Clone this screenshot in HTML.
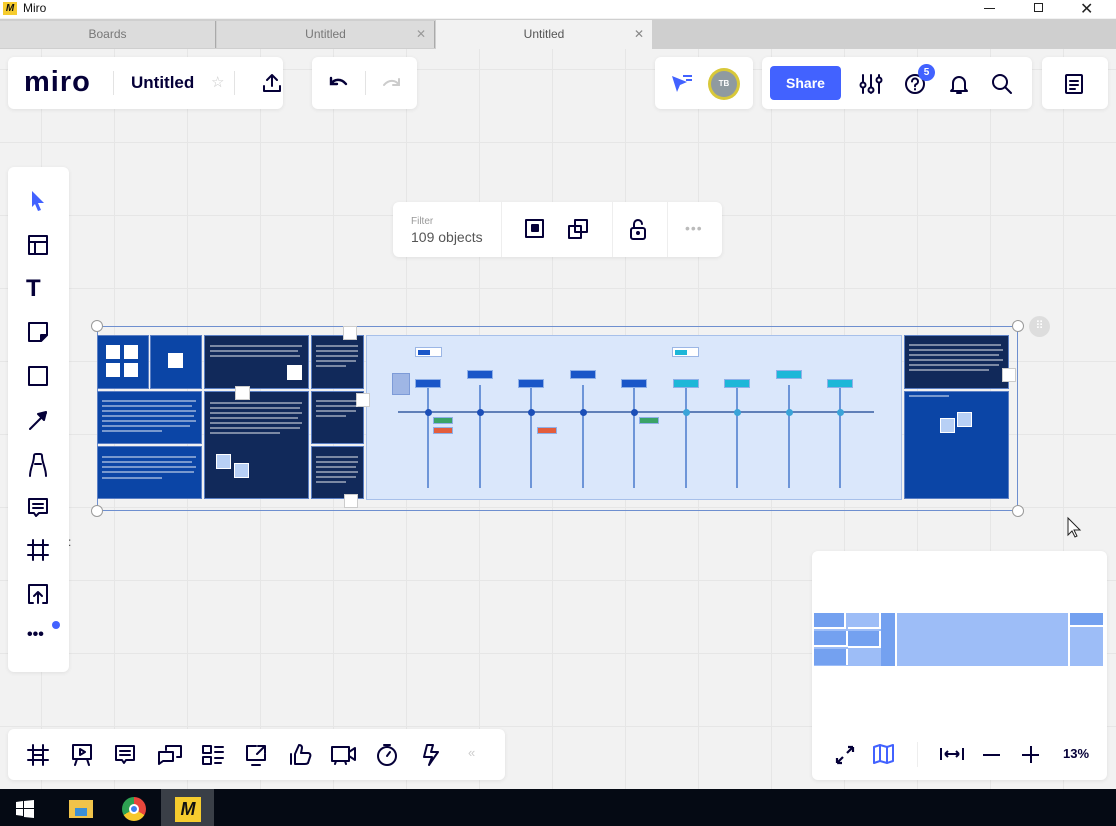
<!DOCTYPE html>
<html><head><meta charset="utf-8"><style>
*{margin:0;padding:0;box-sizing:border-box}
body{width:1116px;height:826px;overflow:hidden;font-family:"Liberation Sans",sans-serif;background:#f2f2f2;position:relative}
.a{position:absolute}
.card{position:absolute;background:#fff;border-radius:6px;box-shadow:0 1px 4px rgba(0,0,0,.08)}
svg{position:absolute;overflow:visible}
.ic{fill:none;stroke:#050038;stroke-width:2;stroke-linecap:round;stroke-linejoin:round}
.nv{background:#11295a;border:1px solid #5b7fc4}
.bl{background:#0b45a6;border:1px solid #5b7fc4}
.lab{position:absolute;width:26px;height:9px;border:1px solid #8fb0e8}
.vl{position:absolute;width:2px;background:#6d95d8;top:385px;height:103px}
.dot{position:absolute;width:7px;height:7px;border-radius:50%;top:409px}
.tx{position:absolute;height:2px;background:rgba(255,255,255,.45)}
</style></head><body>
<!-- canvas grid -->
<div class="a" style="left:0;top:49px;width:1116px;height:740px;background-color:#f2f2f2;background-image:linear-gradient(#e6e6e6 1px,transparent 1px),linear-gradient(90deg,#e6e6e6 1px,transparent 1px);background-size:73px 73px;background-position:-32px 20px"></div>
<!-- title bar -->
<div class="a" style="left:0;top:0;width:1116px;height:18px;background:#fff"></div>
<div class="a" style="left:3px;top:2px;width:14px;height:13px;background:#f6cc2e;font:bold 10px/13px 'Liberation Sans';color:#111;text-align:center;font-style:italic">M</div>
<div class="a" style="left:23px;top:1px;font-size:12px;color:#111">Miro</div>
<div class="a" style="left:984px;top:8px;width:11px;height:1px;background:#222"></div>
<div class="a" style="left:1034px;top:3px;width:9px;height:9px;border:1px solid #222"></div>
<div class="a" style="left:1080px;top:-1px;font-size:16px;color:#222">✕</div>
<!-- tabs -->
<div class="a" style="left:0;top:19px;width:1116px;height:30px;background:#cfcfcf"></div>
<div class="a" style="left:0;top:21px;width:216px;height:27px;background:#dcdcdc;border-right:1px solid #aaa;font-size:12px;color:#777;text-align:center;line-height:27px">Boards</div>
<div class="a" style="left:217px;top:21px;width:218px;height:27px;background:#dcdcdc;border-right:1px solid #aaa;font-size:12px;color:#777;text-align:center;line-height:27px">Untitled<span style="position:absolute;right:8px;color:#999">✕</span></div>
<div class="a" style="left:436px;top:20px;width:216px;height:29px;background:#f2f2f2;font-size:12px;color:#555;text-align:center;line-height:29px">Untitled<span style="position:absolute;right:8px;color:#888">✕</span></div>
<!-- top left card -->
<div class="card" style="left:8px;top:57px;width:275px;height:52px"></div>
<div class="a" style="left:24px;top:64px;font:bold 29px/36px 'Liberation Sans';color:#050038;letter-spacing:1px">miro</div>
<div class="a" style="left:113px;top:71px;width:1px;height:24px;background:#e3e3e3"></div>
<div class="a" style="left:131px;top:73px;font:bold 17px/20px 'Liberation Sans';color:#050038">Untitled</div>
<div class="a" style="left:211px;top:73px;font-size:15px;color:#c9c9c9">☆</div>
<div class="a" style="left:234px;top:71px;width:1px;height:24px;background:#e3e3e3"></div>
<svg style="left:262px;top:73px" width="20" height="20" class="ic"><path d="M10 13V2M5 7l5-5 5 5M2 13v5h16v-5"/></svg>
<div class="card" style="left:312px;top:57px;width:105px;height:52px"></div>
<svg style="left:328px;top:75px" width="20" height="14"><path d="M3 3v6h6M3 9c3-5 10-6 15 0" fill="none" stroke="#050038" stroke-width="2.4" stroke-linecap="round"/></svg>
<div class="a" style="left:365px;top:71px;width:1px;height:24px;background:#e3e3e3"></div>
<svg style="left:382px;top:76px" width="20" height="14"><path d="M17 3v6h-6M17 9c-3-5-10-6-15 0" fill="none" stroke="#ccc" stroke-width="2" stroke-linecap="round"/></svg>
<!-- top right cards -->
<div class="card" style="left:655px;top:57px;width:98px;height:52px"></div>
<svg style="left:671px;top:74px" width="24" height="20"><path d="M1 2l5 16 3-7 7-3z" fill="#4262ff"/><path d="M12 2h9M15 6h6" stroke="#4262ff" stroke-width="2"/></svg>
<div class="a" style="left:708px;top:68px;width:32px;height:32px;border-radius:50%;background:#d8c83a"></div>
<div class="a" style="left:711px;top:71px;width:26px;height:26px;border-radius:50%;background:#8f9aa0;color:#fff;font:bold 8px/26px 'Liberation Sans';text-align:center">TB</div>
<div class="card" style="left:762px;top:57px;width:270px;height:52px"></div>
<div class="a" style="left:770px;top:66px;width:71px;height:34px;background:#4262ff;border-radius:4px;color:#fff;font:bold 14px/34px 'Liberation Sans';text-align:center">Share</div>
<svg style="left:859px;top:73px" width="24" height="22" class="ic"><path d="M4 2v18M12 2v18M20 2v18"/><circle cx="4" cy="12" r="2.5" fill="#fff"/><circle cx="12" cy="17" r="2.5" fill="#fff"/><circle cx="20" cy="7" r="2.5" fill="#fff"/></svg>
<svg style="left:904px;top:73px" width="22" height="22" class="ic"><circle cx="11" cy="11" r="9"/><path d="M8 8.5a3 3 0 1 1 4 2.8c-1 .4-1 1-1 2M11 16v.5"/></svg>
<div class="a" style="left:918px;top:64px;width:17px;height:17px;border-radius:50%;background:#4262ff;color:#fff;font:bold 10px/17px 'Liberation Sans';text-align:center">5</div>
<svg style="left:948px;top:73px" width="22" height="22" class="ic"><path d="M5 16V10a6 6 0 0 1 12 0v6l2 2H3zM9 20h4"/></svg>
<svg style="left:991px;top:73px" width="22" height="22" class="ic"><circle cx="9" cy="9" r="7"/><path d="M14 14l6 6"/></svg>
<div class="card" style="left:1042px;top:57px;width:66px;height:52px"></div>
<svg style="left:1064px;top:73px" width="20" height="22" class="ic"><rect x="2" y="2" width="16" height="18" rx="1"/><path d="M6 8h8M6 12h8M6 16h5"/></svg>
<!-- filter bar -->
<div class="card" style="left:393px;top:202px;width:329px;height:55px"></div>
<div class="a" style="left:411px;top:216px;font-size:10px;color:#999">Filter</div>
<div class="a" style="left:411px;top:229px;font-size:14px;color:#555">109 objects</div>
<div class="a" style="left:501px;top:202px;width:1px;height:55px;background:#eee"></div>
<svg style="left:524px;top:218px" width="22" height="22" class="ic"><rect x="2" y="2" width="17" height="17"/><rect x="8" y="7" width="6" height="6" fill="#050038"/></svg>
<svg style="left:567px;top:218px" width="24" height="22" class="ic"><rect x="8" y="2" width="12" height="12"/><rect x="2" y="8" width="12" height="12"/></svg>
<div class="a" style="left:612px;top:202px;width:1px;height:55px;background:#eee"></div>
<svg style="left:628px;top:218px" width="20" height="24" class="ic"><rect x="3" y="10" width="14" height="11" rx="2"/><path d="M6 10V6a4 4 0 0 1 8 0"/><circle cx="10" cy="15" r="1" fill="#050038"/></svg>
<div class="a" style="left:667px;top:202px;width:1px;height:55px;background:#eee"></div>
<div class="a" style="left:685px;top:220px;font-size:14px;color:#bbb;letter-spacing:1px">•••</div>
<!-- board selection -->
<div class="a" style="left:97px;top:326px;width:921px;height:185px;border:1.5px solid #6e8fcf"></div>
<div class="a" style="left:91px;top:320px;width:12px;height:12px;border-radius:50%;background:#fff;border:1.5px solid #999"></div>
<div class="a" style="left:1012px;top:320px;width:12px;height:12px;border-radius:50%;background:#fff;border:1.5px solid #999"></div>
<div class="a" style="left:91px;top:505px;width:12px;height:12px;border-radius:50%;background:#fff;border:1.5px solid #999"></div>
<div class="a" style="left:1012px;top:505px;width:12px;height:12px;border-radius:50%;background:#fff;border:1.5px solid #999"></div>
<div class="a" style="left:1029px;top:316px;width:21px;height:21px;border-radius:50%;background:#ddd;color:#fff;font-size:11px;text-align:center;line-height:21px">⠿</div>
<!-- panels -->
<div class="a bl" style="left:97px;top:335px;width:52px;height:54px"></div>
<div class="a bl" style="left:150px;top:335px;width:52px;height:54px"></div>
<div class="a bl" style="left:97px;top:391px;width:105px;height:53px"></div>
<div class="a bl" style="left:97px;top:446px;width:105px;height:53px"></div>
<div class="a nv" style="left:204px;top:335px;width:105px;height:54px"></div>
<div class="a nv" style="left:204px;top:391px;width:105px;height:108px"></div>
<div class="a nv" style="left:311px;top:335px;width:53px;height:54px"></div>
<div class="a nv" style="left:311px;top:391px;width:53px;height:53px"></div>
<div class="a nv" style="left:311px;top:446px;width:53px;height:53px"></div>
<div class="a" style="left:366px;top:335px;width:536px;height:165px;background:#dae7fb;border:1px solid #a7c0ea"></div>
<div class="a nv" style="left:904px;top:335px;width:105px;height:54px"></div>
<div class="a bl" style="left:904px;top:391px;width:105px;height:108px"></div>
<!-- small notes -->
<div class="a" style="left:106px;top:345px;width:14px;height:14px;background:#fff"></div>
<div class="a" style="left:124px;top:345px;width:14px;height:14px;background:#fff"></div>
<div class="a" style="left:106px;top:363px;width:14px;height:14px;background:#fff"></div>
<div class="a" style="left:124px;top:363px;width:14px;height:14px;background:#fff"></div>
<div class="a" style="left:168px;top:353px;width:15px;height:15px;background:#fff"></div>
<div class="a" style="left:287px;top:365px;width:15px;height:15px;background:#fff"></div>
<div class="a" style="left:216px;top:454px;width:15px;height:15px;background:#b8d0f5;border:1px solid #fff"></div>
<div class="a" style="left:234px;top:463px;width:15px;height:15px;background:#b8d0f5;border:1px solid #fff"></div>
<div class="a" style="left:940px;top:418px;width:15px;height:15px;background:#b8d0f5;border:1px solid #fff"></div>
<div class="a" style="left:957px;top:412px;width:15px;height:15px;background:#b8d0f5;border:1px solid #fff"></div>
<div class="a" style="left:235px;top:386px;width:15px;height:14px;background:#fff;border:1px solid #ccc"></div>
<div class="a" style="left:343px;top:326px;width:14px;height:14px;background:#fff;border:1px solid #ccc"></div>
<div class="a" style="left:356px;top:393px;width:14px;height:14px;background:#fff;border:1px solid #ccc"></div>
<div class="a" style="left:344px;top:494px;width:14px;height:14px;background:#fff;border:1px solid #ccc"></div>
<div class="a" style="left:1002px;top:368px;width:14px;height:14px;background:#fff;border:1px solid #ccc"></div>
<!-- text bars -->
<div class="tx" style="left:210px;top:345px;width:92px"></div><div class="tx" style="left:210px;top:350px;width:88px"></div><div class="tx" style="left:210px;top:355px;width:90px"></div>
<div class="tx" style="left:210px;top:402px;width:92px"></div><div class="tx" style="left:210px;top:407px;width:90px"></div><div class="tx" style="left:210px;top:412px;width:92px"></div><div class="tx" style="left:210px;top:417px;width:88px"></div><div class="tx" style="left:210px;top:422px;width:92px"></div><div class="tx" style="left:210px;top:427px;width:90px"></div><div class="tx" style="left:210px;top:432px;width:70px"></div>
<div class="tx" style="left:102px;top:400px;width:94px"></div><div class="tx" style="left:102px;top:405px;width:90px"></div><div class="tx" style="left:102px;top:410px;width:94px"></div><div class="tx" style="left:102px;top:415px;width:92px"></div><div class="tx" style="left:102px;top:420px;width:94px"></div><div class="tx" style="left:102px;top:425px;width:88px"></div><div class="tx" style="left:102px;top:430px;width:60px"></div>
<div class="tx" style="left:102px;top:456px;width:94px"></div><div class="tx" style="left:102px;top:461px;width:90px"></div><div class="tx" style="left:102px;top:466px;width:94px"></div><div class="tx" style="left:102px;top:471px;width:92px"></div><div class="tx" style="left:102px;top:477px;width:60px"></div>
<div class="tx" style="left:316px;top:345px;width:42px"></div><div class="tx" style="left:316px;top:350px;width:42px"></div><div class="tx" style="left:316px;top:355px;width:42px"></div><div class="tx" style="left:316px;top:360px;width:40px"></div><div class="tx" style="left:316px;top:365px;width:30px"></div>
<div class="tx" style="left:316px;top:400px;width:42px"></div><div class="tx" style="left:316px;top:405px;width:42px"></div><div class="tx" style="left:316px;top:410px;width:40px"></div><div class="tx" style="left:316px;top:415px;width:30px"></div>
<div class="tx" style="left:316px;top:456px;width:42px"></div><div class="tx" style="left:316px;top:461px;width:42px"></div><div class="tx" style="left:316px;top:466px;width:40px"></div><div class="tx" style="left:316px;top:471px;width:42px"></div><div class="tx" style="left:316px;top:476px;width:40px"></div><div class="tx" style="left:316px;top:481px;width:30px"></div>
<div class="tx" style="left:909px;top:344px;width:92px"></div><div class="tx" style="left:909px;top:349px;width:94px"></div><div class="tx" style="left:909px;top:354px;width:90px"></div><div class="tx" style="left:909px;top:359px;width:94px"></div><div class="tx" style="left:909px;top:364px;width:90px"></div><div class="tx" style="left:909px;top:369px;width:80px"></div>
<div class="tx" style="left:909px;top:395px;width:40px"></div>
<!-- timeline -->
<div class="a" style="left:398px;top:411px;width:476px;height:2px;background:#5f7fb8"></div>
<div class="vl" style="left:427px"></div><div class="vl" style="left:479px"></div><div class="vl" style="left:530px"></div><div class="vl" style="left:582px"></div><div class="vl" style="left:633px"></div><div class="vl" style="left:685px"></div><div class="vl" style="left:736px"></div><div class="vl" style="left:788px"></div><div class="vl" style="left:839px"></div>
<div class="dot" style="left:425px;background:#1c4fb8"></div><div class="dot" style="left:477px;background:#1c4fb8"></div><div class="dot" style="left:528px;background:#1c4fb8"></div><div class="dot" style="left:580px;background:#1c4fb8"></div><div class="dot" style="left:631px;background:#1c4fb8"></div><div class="dot" style="left:683px;background:#3aa4d8"></div><div class="dot" style="left:734px;background:#3aa4d8"></div><div class="dot" style="left:786px;background:#3aa4d8"></div><div class="dot" style="left:837px;background:#3aa4d8"></div>
<div class="lab" style="left:415px;top:379px;background:#1a56c8"></div><div class="lab" style="left:467px;top:370px;background:#1a56c8"></div><div class="lab" style="left:518px;top:379px;background:#1a56c8"></div><div class="lab" style="left:570px;top:370px;background:#1a56c8"></div><div class="lab" style="left:621px;top:379px;background:#1a56c8"></div><div class="lab" style="left:673px;top:379px;background:#1db7d8"></div><div class="lab" style="left:724px;top:379px;background:#1db7d8"></div><div class="lab" style="left:776px;top:370px;background:#1db7d8"></div><div class="lab" style="left:827px;top:379px;background:#1db7d8"></div>
<div class="a" style="left:415px;top:347px;width:27px;height:10px;background:#fff;border:1px solid #9bb6e5"><div style="width:12px;height:5px;background:#1a56c8;margin:2px"></div></div>
<div class="a" style="left:672px;top:347px;width:27px;height:10px;background:#fff;border:1px solid #9bb6e5"><div style="width:12px;height:5px;background:#1db7d8;margin:2px"></div></div>
<div class="a" style="left:392px;top:373px;width:18px;height:22px;background:#9fb6e5;border:1px solid #7d9bd8"></div>
<div class="a" style="left:433px;top:417px;width:20px;height:7px;background:#3aa367;border:1px solid #8fb0e8"></div>
<div class="a" style="left:433px;top:427px;width:20px;height:7px;background:#e35d3c;border:1px solid #8fb0e8"></div>
<div class="a" style="left:537px;top:427px;width:20px;height:7px;background:#e35d3c;border:1px solid #8fb0e8"></div>
<div class="a" style="left:639px;top:417px;width:20px;height:7px;background:#3aa367;border:1px solid #8fb0e8"></div>
<!-- cursor -->
<svg style="left:1067px;top:517px" width="14" height="22"><path d="M1 1v17l4-4 3 6 2-1-3-6h6z" fill="#fff" stroke="#222" stroke-width="1"/></svg>
<!-- left toolbar -->
<div class="card" style="left:8px;top:167px;width:61px;height:505px"></div>
<svg style="left:30px;top:190px" width="16" height="22"><path d="M2 1l12 12h-6l3 7-3 1-3-7-3 3z" fill="#4262ff"/></svg>
<svg style="left:27px;top:234px" width="22" height="22" class="ic"><rect x="2" y="2" width="18" height="18"/><path d="M2 8h18M8 8v12"/></svg>
<div class="a" style="left:26px;top:275px;font:bold 24px 'Liberation Sans';color:#050038">T</div>
<svg style="left:27px;top:321px" width="22" height="22" class="ic"><path d="M2 2h18v12l-6 6H2z"/><path d="M14 20v-6h6z" fill="#050038"/></svg>
<svg style="left:27px;top:365px" width="22" height="22" class="ic"><rect x="2" y="2" width="18" height="18"/></svg>
<svg style="left:27px;top:409px" width="22" height="22" class="ic"><path d="M3 20L19 4"/><path d="M19 3l-8 2 6 6z" fill="#050038"/></svg>
<svg style="left:27px;top:452px" width="22" height="26" class="ic"><path d="M3 24c0-8 4-13 4-20 0-2 1-2 2-2h4c1 0 2 0 2 2 0 7 4 12 4 20M8 12h6"/></svg>
<svg style="left:27px;top:497px" width="22" height="22" class="ic"><path d="M2 2h18v14h-8l-3 3-2-3H2z"/><path d="M6 7h10M6 11h10"/></svg>
<svg style="left:27px;top:539px" width="22" height="22" class="ic"><path d="M6 1v20M16 1v20M1 6h20M1 16h20"/></svg>
<div class="a" style="left:68px;top:535px;font-size:12px;color:#444">:</div>
<svg style="left:27px;top:583px" width="22" height="22" class="ic"><path d="M6 20H2V2h18v18h-4M11 20V9M7 13l4-4 4 4"/></svg>
<div class="a" style="left:27px;top:626px;font:bold 16px 'Liberation Sans';color:#050038;letter-spacing:0px">•••</div>
<div class="a" style="left:52px;top:621px;width:8px;height:8px;border-radius:50%;background:#4262ff"></div>
<!-- bottom toolbar -->
<div class="card" style="left:8px;top:729px;width:497px;height:51px"></div>
<svg style="left:27px;top:744px" width="22" height="22" class="ic"><path d="M6 1v20M16 1v20M1 6h20M1 16h20M6 11h10"/></svg>
<svg style="left:71px;top:743px" width="22" height="24" class="ic"><rect x="2" y="2" width="18" height="14"/><path d="M9 6l5 3-5 3z M6 16l-2 6M16 16l2 6"/></svg>
<svg style="left:114px;top:744px" width="22" height="22" class="ic"><path d="M2 2h18v14h-8l-2 3-2-3H2z"/><path d="M6 7h10M6 11h10"/></svg>
<svg style="left:157px;top:744px" width="26" height="22" class="ic"><path d="M9 6V2h15v11h-4M2 20V8h14v9H6z"/></svg>
<svg style="left:201px;top:744px" width="24" height="22" class="ic"><rect x="2" y="2" width="8" height="7"/><rect x="2" y="13" width="8" height="7"/><path d="M14 3h8M14 8h8M14 14h8M14 19h6"/></svg>
<svg style="left:245px;top:744px" width="24" height="24" class="ic"><path d="M11 2H2v14h18v-6M13 2h7v7M20 2l-8 8M7 21h8"/></svg>
<svg style="left:289px;top:743px" width="24" height="24" class="ic"><path d="M2 11v10M6 11l4-9c2 0 3 1 3 3l-1 5h7c2 0 3 2 2 4l-2 6c-1 1-2 1-3 1H6z"/></svg>
<svg style="left:330px;top:745px" width="28" height="20" class="ic"><rect x="2" y="2" width="17" height="14"/><path d="M19 7l6-4v12l-6-4M6 16l-1 3M15 16l1 3"/></svg>
<svg style="left:376px;top:743px" width="24" height="24" class="ic"><circle cx="11" cy="13" r="9"/><path d="M11 13l3-4M8 2h6"/></svg>
<svg style="left:421px;top:743px" width="20" height="24" class="ic"><path d="M6 2L3 14h8l-3 8 9-13h-7l2-7z"/></svg>
<div class="a" style="left:468px;top:745px;font-size:13px;color:#ccc">«</div>
<!-- minimap -->
<div class="card" style="left:812px;top:551px;width:295px;height:229px"></div>
<div class="a" style="left:814px;top:613px;width:289px;height:53px;background:#9dbdf7"></div>
<div class="a" style="left:814px;top:613px;width:32px;height:16px;background:#74a1f0;border-right:2px solid #fff;border-bottom:2px solid #fff"></div>
<div class="a" style="left:848px;top:613px;width:33px;height:16px;background:#9dbdf7;border-right:2px solid #fff;border-bottom:2px solid #fff"></div>
<div class="a" style="left:814px;top:631px;width:34px;height:16px;background:#74a1f0;border-bottom:2px solid #fff;border-right:2px solid #fff"></div>
<div class="a" style="left:814px;top:649px;width:34px;height:16px;background:#74a1f0;border-right:2px solid #fff"></div>
<div class="a" style="left:848px;top:631px;width:33px;height:17px;background:#74a1f0;border-right:2px solid #fff;border-bottom:2px solid #fff"></div>
<div class="a" style="left:881px;top:613px;width:16px;height:53px;background:#74a1f0;border-right:2px solid #fff"></div>
<div class="a" style="left:1068px;top:613px;width:35px;height:53px;background:#9dbdf7;border-left:2px solid #fff"></div>
<div class="a" style="left:1070px;top:613px;width:33px;height:14px;background:#74a1f0;border-bottom:2px solid #fff"></div>
<svg style="left:834px;top:744px" width="22" height="22"><path d="M3 19l6-6M3 19v-5M3 19h5M19 3l-6 6M19 3v5M19 3h-5" fill="none" stroke="#050038" stroke-width="2.2"/></svg>
<svg style="left:872px;top:743px" width="24" height="22"><path d="M2 4l6-2 7 2 6-2v16l-6 2-7-2-6 2zM8 2v16M15 4v16" fill="none" stroke="#4262ff" stroke-width="2" stroke-linejoin="round"/></svg>
<div class="a" style="left:917px;top:742px;width:1px;height:25px;background:#eee"></div>
<svg style="left:939px;top:746px" width="26" height="16"><path d="M2 2v12M24 2v12M6 8h14M6 8l3-3M6 8l3 3M20 8l-3-3M20 8l-3 3" fill="none" stroke="#050038" stroke-width="2"/></svg>
<div class="a" style="left:983px;top:754px;width:17px;height:2px;background:#050038"></div>
<div class="a" style="left:1022px;top:754px;width:17px;height:2px;background:#050038"></div>
<div class="a" style="left:1030px;top:746px;width:2px;height:17px;background:#050038"></div>
<div class="a" style="left:1063px;top:746px;font:bold 13px 'Liberation Sans';color:#050038">13%</div>
<!-- taskbar -->
<div class="a" style="left:0;top:789px;width:1116px;height:37px;background:#050a14"></div>
<svg style="left:16px;top:800px" width="18" height="18"><path d="M0 2l7-1v7H0zM8 1l10-1v8H8zM0 9h7v7l-7-1zM8 9h10v9l-10-1z" fill="#fff"/></svg>
<div class="a" style="left:69px;top:800px;width:24px;height:18px;background:#f0c34a"></div>
<div class="a" style="left:75px;top:808px;width:12px;height:8px;background:#3b8fd6"></div>
<div class="a" style="left:122px;top:797px;width:24px;height:24px;border-radius:50%;background:conic-gradient(#e8463c 0 120deg,#f7c82c 120deg 240deg,#2ea152 240deg)"></div>
<div class="a" style="left:129px;top:804px;width:10px;height:10px;border-radius:50%;background:#3b80f0;border:2px solid #fff"></div>
<div class="a" style="left:161px;top:789px;width:53px;height:37px;background:#3a3f47"></div>
<div class="a" style="left:175px;top:797px;width:26px;height:25px;background:#f6cc2e;color:#111;font:bold italic 18px/25px 'Liberation Sans';text-align:center">M</div>
</body></html>
